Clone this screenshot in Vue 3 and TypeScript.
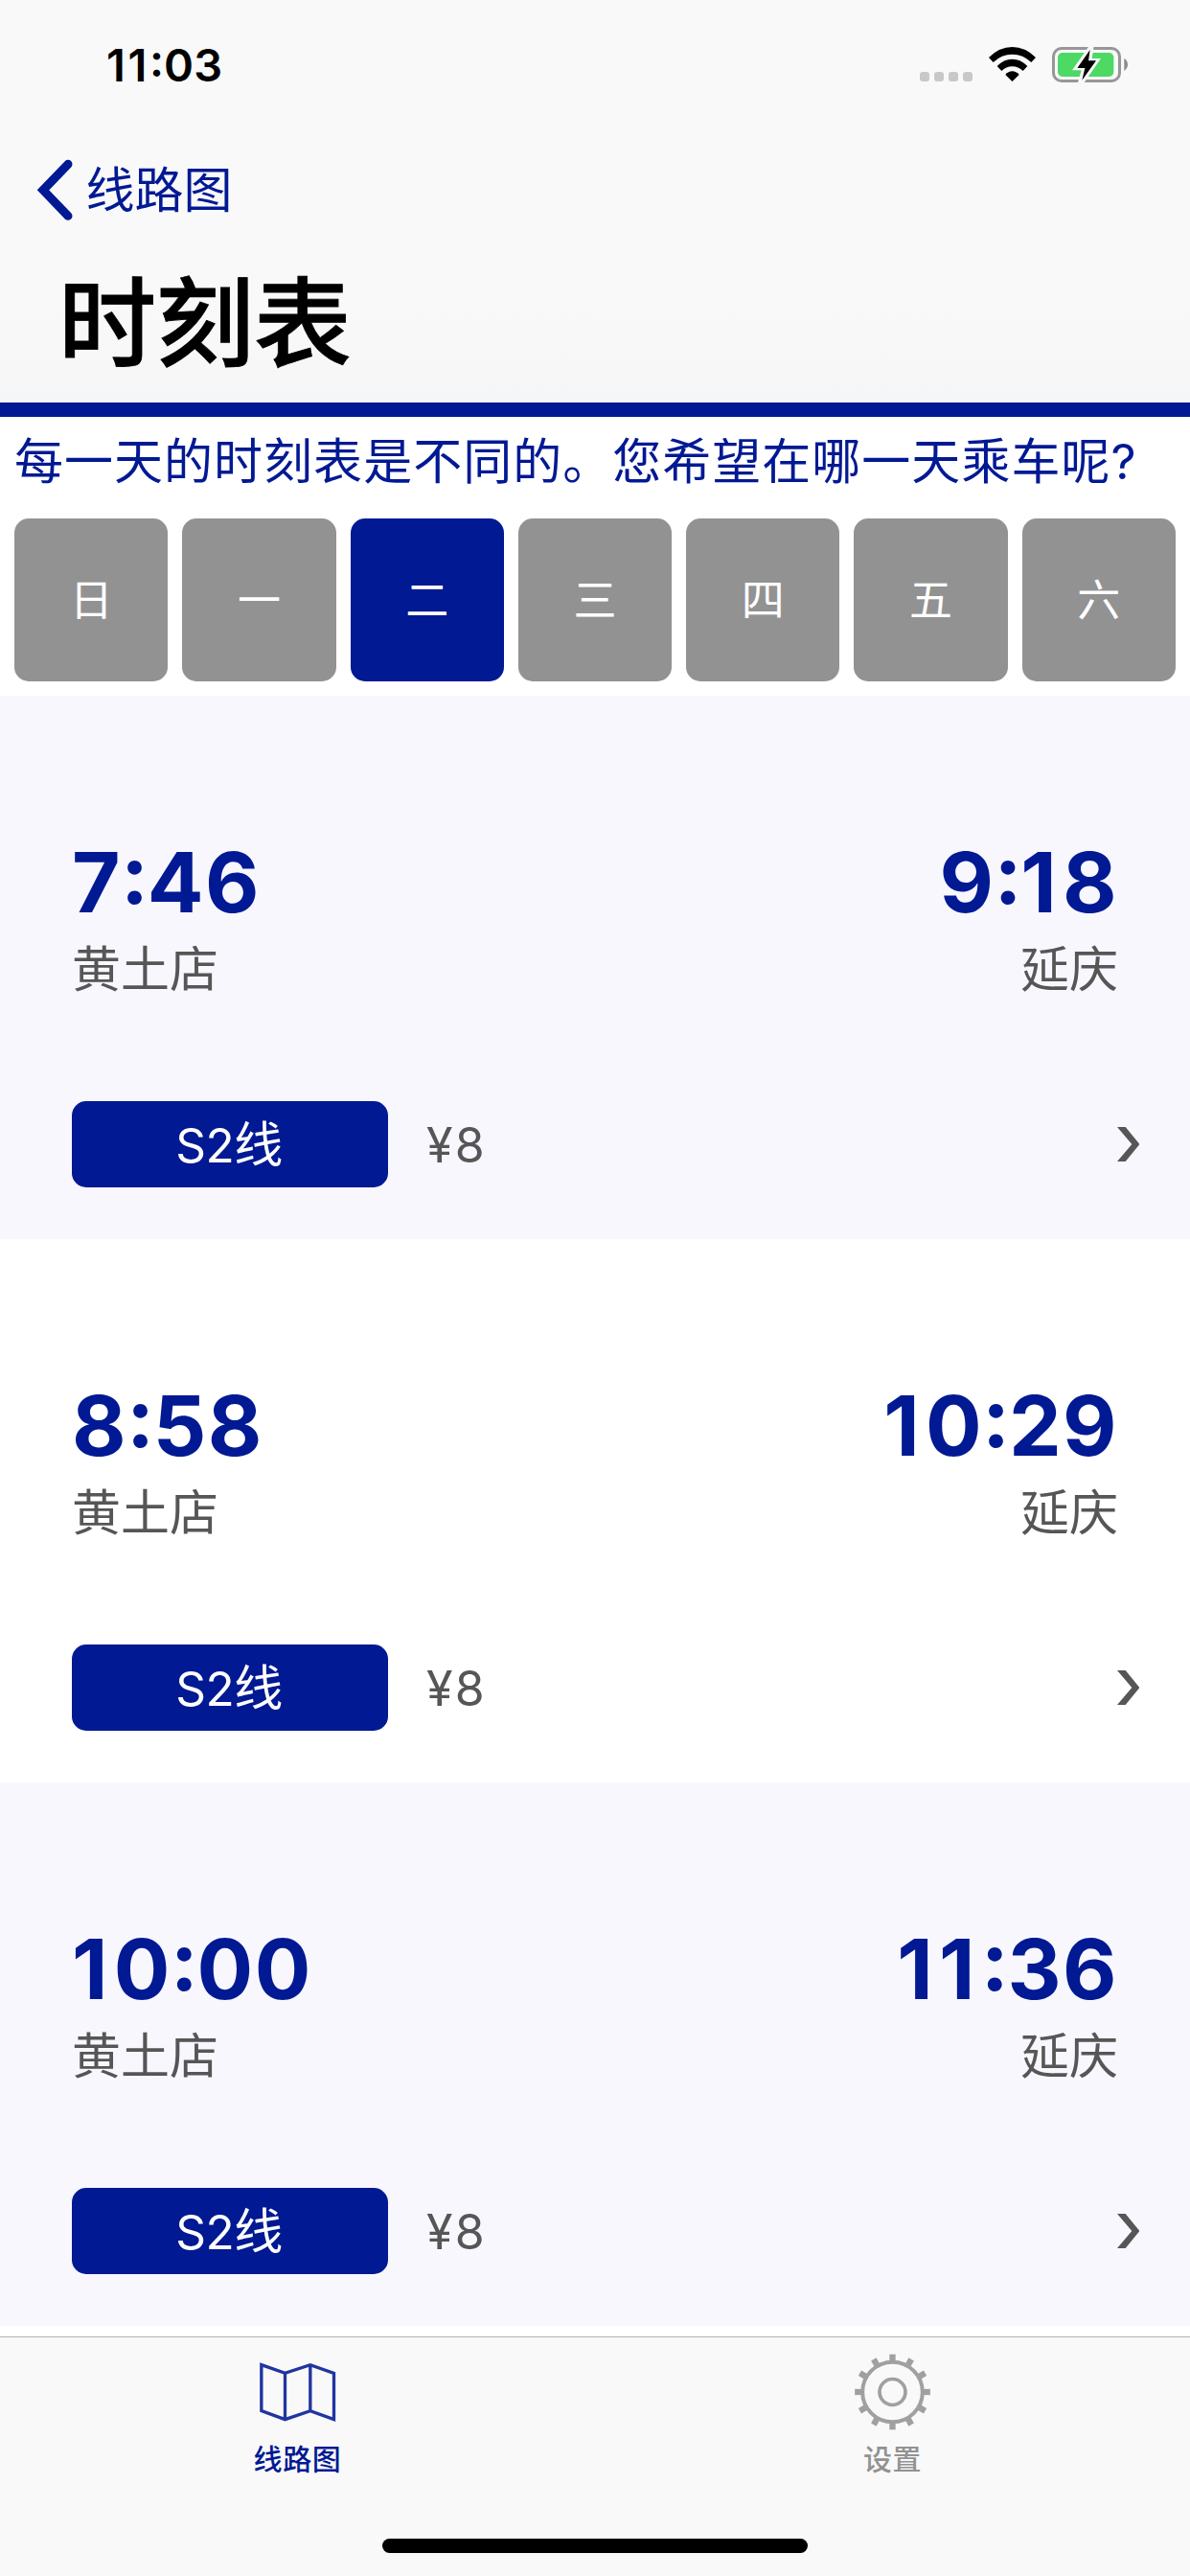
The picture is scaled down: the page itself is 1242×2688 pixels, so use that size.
<script setup lang="ts">
import { ref } from 'vue'

interface Trip {
  departs: string
  from: string
  arrives: string
  to: string
  line: string
  price: string
}

const days: string[] = ['日', '一', '二', '三', '四', '五', '六']
const selectedDay = ref<number>(2)

const trips: Trip[] = [
  { departs: '7:46', from: '黄土店', arrives: '9:18', to: '延庆', line: 'S2', price: '¥8' },
  { departs: '8:58', from: '黄土店', arrives: '10:29', to: '延庆', line: 'S2', price: '¥8' },
  { departs: '10:00', from: '黄土店', arrives: '11:36', to: '延庆', line: 'S2', price: '¥8' },
]

const teeth: number[] = Array.from({ length: 12 }, (_, i) => i * 30)

// Each glyph of a time gets its own spacing class: ones are set wide, colons are raised.
function glyphClass(char: string): string {
  if (char === '1') return 'one'
  if (char === ':') return 'colon'
  return 'digit'
}
</script>

<template>
  <div class="screen">
    <header class="header">
      <div class="status">
        <span class="clock"><span v-for="(c, i) in '11:03'" :key="i" :class="glyphClass(c)">{{ c }}</span></span>
        <svg class="indicators" viewBox="0 0 966 300" width="322" height="100">
          <g fill="#c8c8c8">
            <rect x="120" y="165" width="30" height="30" rx="9" />
            <rect x="165" y="165" width="30" height="30" rx="9" />
            <rect x="210" y="165" width="30" height="30" rx="9" />
            <rect x="255" y="165" width="30" height="30" rx="9" />
          </g>
          <path d="M336 120Q369 87 409.500 87Q450 87 483 120L469 135Q443 110 409.500 110Q376 110 350 135Z" />
          <path d="M362 147Q383 125 409.500 125Q436 125 457 147L443 162Q429 148 409.500 148Q390 148 376 162Z" />
          <path d="M388 174Q397 163 409.500 163Q422 163 431 174L409.500 195Z" />
          <rect x="538.500" y="91.500" width="207" height="102" rx="25" fill="none" stroke="#979797" stroke-width="9" />
          <rect x="552" y="105" width="175" height="75" rx="15" fill="#4cd964" />
          <path d="M760 122Q771 130 771 142Q771 154 760 162Z" fill="#8c8c8c" />
          <path d="M650 84H665L659 123H687L635 198H615L626 160H597Z" fill="#f9f9f9" />
          <path d="M653 96L648 130L672 130L628 191L637 153L613 153Z" />
        </svg>
      </div>
      <div class="back">
        <svg class="back-arrow" viewBox="110 495 126 200" width="42" height="66.670">
          <path d="M212 514L134 595L212 676" fill="none" stroke="#011993" stroke-width="27" stroke-linecap="round" />
        </svg>
        <span class="back-label">线路图</span>
      </div>
      <h1 class="title">时刻表</h1>
    </header>

    <section class="picker">
      <p class="prompt">每一天的时刻表是不同的。您希望在哪一天乘车呢?</p>
      <div class="days">
        <button
          v-for="(day, i) in days"
          :key="day"
          class="day"
          :class="{ active: i === selectedDay }"
          @click="selectedDay = i"
        >{{ day }}</button>
      </div>
    </section>

    <main class="trips">
      <article v-for="trip in trips" :key="trip.departs" class="trip">
        <div class="row times">
          <span><span v-for="(c, i) in trip.departs" :key="i" :class="glyphClass(c)">{{ c }}</span></span>
          <span><span v-for="(c, i) in trip.arrives" :key="i" :class="glyphClass(c)">{{ c }}</span></span>
        </div>
        <div class="row stations">
          <span>{{ trip.from }}</span>
          <span>{{ trip.to }}</span>
        </div>
        <div class="details">
          <div class="badge"><span class="latin">{{ trip.line }}</span>线</div>
          <span class="price">{{ trip.price }}</span>
          <svg class="chevron" viewBox="0 0 70 108" width="23.330" height="36">
            <path d="M0 0H26L70 54L26 108H0L46 54Z" fill="#565656" />
          </svg>
        </div>
      </article>
    </main>

    <nav class="tabs">
      <div class="tab selected">
        <svg class="tab-icon" viewBox="151.500 165 240 245" width="80" height="81.670">
          <path
            d="M157 203L231 229L310 203L384 229V374L310 347L231 374L157 347ZM231 229V374M310 203V347"
            fill="none" stroke="#011993" stroke-opacity="0.88" stroke-width="10"
          />
        </svg>
        <span>线路图</span>
      </div>
      <div class="tab">
        <svg class="tab-icon" viewBox="154.500 165 240 245" width="80" height="81.670">
          <g fill="none" stroke="#a0a0a0">
            <circle cx="273" cy="288" r="94" stroke-width="12" />
            <circle cx="273" cy="288" r="40.500" stroke-width="11" />
            <path
              v-for="angle in teeth"
              :key="angle"
              d="M273 170V192"
              stroke-width="19"
              :transform="`rotate(${angle} 273 288)`"
            />
          </g>
        </svg>
        <span>设置</span>
      </div>
      <div class="home-indicator"></div>
    </nav>
  </div>
</template>

<style>
body {
  margin: 0;
  background: #fff;
}
</style>

<style scoped>
.screen {
  width: 1242px;
  height: 2688px;
  display: flex;
  flex-direction: column;
  overflow: hidden;
  background: #fff;
  font-family: Inter, "Noto Sans CJK SC", sans-serif;
}

.header {
  height: 420px;
  flex: none;
  background: linear-gradient(#f9f9f9 0, #f9f9f9 310px, #f7f7f8 390px, #f5f6f9 420px);
}

.status {
  height: 132px;
  display: flex;
  justify-content: space-between;
  align-items: flex-start;
}

.clock {
  margin: 38px 0 0 111px;
  font-size: 47px;
  font-weight: 600;
  line-height: 60px;
  font-feature-settings: "calt" 0;
}

.clock .one {
  letter-spacing: 2.600px;
}

.clock .digit {
  letter-spacing: 0.300px;
}

.colon {
  line-height: 0;
  vertical-align: 0.105em;
}

.indicators {
  margin-top: 20px;
}

.back {
  height: 132px;
  display: flex;
  align-items: center;
  padding-left: 36.600px;
  color: #011993;
  font-size: 51px;
  line-height: 60px;
}

.back-arrow {
  margin-right: 11px;
}

.back-label {
  padding-top: 2px;
}

.title {
  margin: 21px 0 0 61px;
  font-size: 102px;
  font-weight: 500;
  line-height: 106px;
  -webkit-text-stroke: 0.8px #000;
}

.picker {
  box-sizing: border-box;
  height: 306px;
  flex: none;
  border-top: 15px solid #011993;
  display: flex;
  flex-direction: column;
}

.prompt {
  margin: 14px 0 0 15px;
  height: 92px;
  color: #011993;
  font-size: 51px;
  line-height: 66px;
  letter-spacing: 1.020px;
  white-space: nowrap;
}

.days {
  display: flex;
  gap: 15px;
  padding: 0 15px;
}

.day {
  flex: 1 1 0;
  min-width: 0;
  height: 170px;
  padding: 2px 0 0;
  border: 0;
  border-radius: 15px;
  background: #929292;
  color: #fff;
  font: 45px/54px Inter, "Noto Sans CJK SC", sans-serif;
}

.day.active {
  background: #011993;
}

.trips {
  flex: 1;
  min-height: 0;
}

.trip {
  box-sizing: border-box;
  height: 567px;
  padding: 141px 75px 0;
  color: #565656;
}

.trip:nth-child(odd) {
  background: #f8f7fe;
}

.row {
  display: flex;
  justify-content: space-between;
}

.times {
  color: #011993;
  font-size: 87px;
  font-weight: 700;
  line-height: 107px;
  height: 107px;
  font-feature-settings: "calt" 0;
}

.times .one {
  letter-spacing: 6.200px;
}

.times .colon {
  letter-spacing: -1.200px;
}

.times .digit {
  letter-spacing: 1.400px;
}

.times .digit:has(+ .colon) {
  letter-spacing: 0.300px;
}

.stations {
  padding-top: 2px;
  font-size: 51px;
  line-height: 72px;
}

.details {
  display: flex;
  align-items: center;
  margin-top: 101px;
  margin-right: -22.300px;
}

.badge {
  width: 330px;
  height: 90px;
  border-radius: 15px;
  background: #011993;
  color: #fff;
  font-size: 51px;
  line-height: 92px;
  text-align: center;
  text-indent: -1.500px;
}

.latin {
  font-size: 49.500px;
  letter-spacing: -0.400px;
}

.price {
  margin-left: 40px;
  height: 90px;
  font-size: 50px;
  line-height: 92px;
  letter-spacing: 2.300px;
}

.chevron {
  margin-left: auto;
}

.tabs {
  position: relative;
  flex: none;
  box-sizing: border-box;
  height: 250px;
  border-top: 1px solid #b0b0b0;
  background: #f9f9f9;
  display: flex;
}

.tab {
  flex: 1;
  display: flex;
  flex-direction: column;
  align-items: center;
  padding-top: 16px;
  color: #929292;
  font-size: 30px;
  font-weight: 500;
  line-height: 36px;
  letter-spacing: 0.6px;
}

.tab.selected {
  color: #011993;
}

.tab-icon {
  margin-bottom: 11px;
}

.home-indicator {
  position: absolute;
  left: 399px;
  bottom: 24px;
  width: 444px;
  height: 15px;
  border-radius: 7.500px;
  background: #000;
}
</style>
